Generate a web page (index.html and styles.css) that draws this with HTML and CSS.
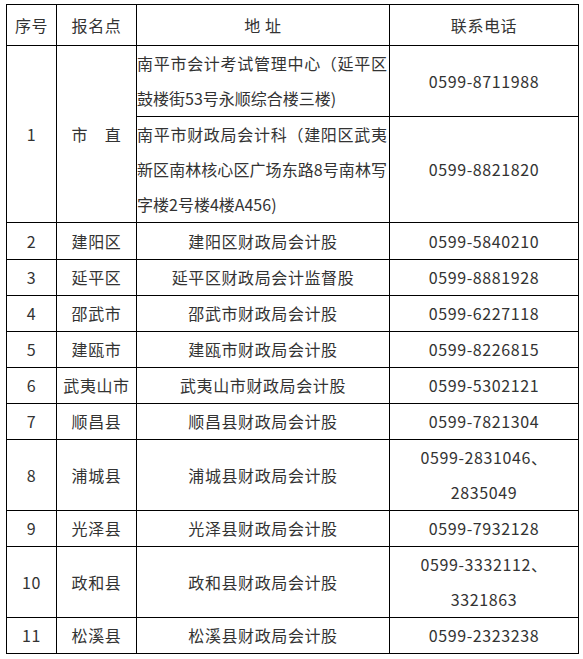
FILE: index.html
```html
<!DOCTYPE html>
<html lang="zh-CN">
<head>
<meta charset="utf-8">
<title>报名点</title>
<link rel="stylesheet" href="styles.css">
</head>
<body>
<table class="grid">
  <colgroup>
    <col class="c1">
    <col class="c2">
    <col class="c3">
    <col class="c4">
  </colgroup>
  <thead>
    <tr class="head">
      <th>序号</th>
      <th>报名点</th>
      <th>地 址</th>
      <th>联系电话</th>
    </tr>
  </thead>
  <tbody>
    <tr>
      <td rowspan="2">1</td>
      <td rowspan="2">市　直</td>
      <td class="left">南平市会计考试管理中心（延平区鼓楼街53号永顺综合楼三楼)</td>
      <td>0599-8711988</td>
    </tr>
    <tr>
      <td class="left">南平市财政局会计科（建阳区武夷新区南林核心区广场东路8号南林写字楼2号楼4楼A456)</td>
      <td>0599-8821820</td>
    </tr>
    <tr class="tall">
      <td>2</td><td>建阳区</td><td>建阳区财政局会计股</td><td>0599-5840210</td>
    </tr>
    <tr>
      <td>3</td><td>延平区</td><td>延平区财政局会计监督股</td><td>0599-8881928</td>
    </tr>
    <tr>
      <td>4</td><td>邵武市</td><td>邵武市财政局会计股</td><td>0599-6227118</td>
    </tr>
    <tr>
      <td>5</td><td>建瓯市</td><td>建瓯市财政局会计股</td><td>0599-8226815</td>
    </tr>
    <tr>
      <td>6</td><td>武夷山市</td><td>武夷山市财政局会计股</td><td>0599-5302121</td>
    </tr>
    <tr>
      <td>7</td><td>顺昌县</td><td>顺昌县财政局会计股</td><td>0599-7821304</td>
    </tr>
    <tr>
      <td>8</td><td>浦城县</td><td>浦城县财政局会计股</td><td>0599-2831046、<br>2835049</td>
    </tr>
    <tr>
      <td>9</td><td>光泽县</td><td>光泽县财政局会计股</td><td>0599-7932128</td>
    </tr>
    <tr>
      <td>10</td><td>政和县</td><td>政和县财政局会计股</td><td>0599-3332112、<br>3321863</td>
    </tr>
    <tr>
      <td>11</td><td>松溪县</td><td>松溪县财政局会计股</td><td>0599-2323238</td>
    </tr>
  </tbody>
</table>
</body>
</html>
```

FILE: styles.css
```css
html, body {
  margin: 0;
  background: #ffffff;
}

body {
  padding: 4px 0 0 6px;
  font-family: "Noto Sans CJK SC", "Microsoft YaHei", sans-serif;
  font-size: 16px;
  color: #333333;
}

.grid {
  border-collapse: collapse;
  table-layout: fixed;
  width: 572px;
}

.c1 { width: 50px; }
.c2 { width: 80px; }
.c3 { width: 253px; }
.c4 { width: 189px; }

.grid th,
.grid td {
  border: 1px solid #000000;
  padding: 0;
  text-align: center;
  vertical-align: middle;
  font-weight: normal;
  line-height: 35px;
  letter-spacing: 0.6px;
}

.grid th {
  line-height: 40px;
}

.grid td.left {
  text-align: justify;
  letter-spacing: 0;
  padding-right: 2px;
}

.tall td {
  line-height: 36px;
}
```
